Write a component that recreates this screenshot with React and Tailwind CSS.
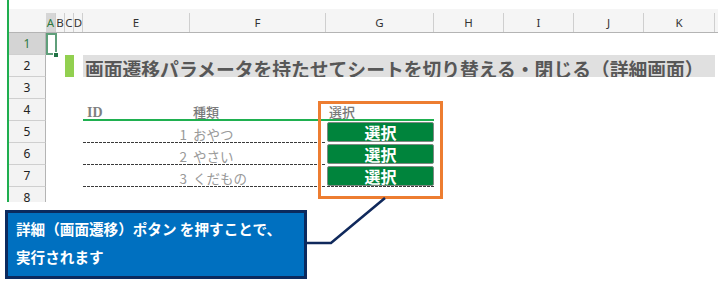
import React from "react";

const DASH =
  "h-px w-full bg-[linear-gradient(to_right,#3a3a3a_0_3px,transparent_3px_4px)] bg-[length:4px_1px] bg-repeat-x";

function RowHead({ n, sel }) {
  return (
    <div
      className={
        sel
          ? "w-[37px] shrink-0 h-full border-r border-b border-r-[#b4b4b4] border-b-[#cfcfcf] bg-[#d4d4d4] text-[#2f7a3e] flex items-center justify-center text-[12px] font-['Noto_Sans',sans-serif]"
          : "w-[37px] shrink-0 h-full border-r border-b border-r-[#b4b4b4] border-b-[#cfcfcf] bg-[#f3f3f3] text-[#222] flex items-center justify-center text-[12px] font-['Noto_Sans',sans-serif]"
      }
    >
      {n}
    </div>
  );
}

function Lead() {
  return (
    <>
      <div className="w-[10px] shrink-0" />
      <div className="w-[9px] shrink-0" />
      <div className="w-[9px] shrink-0" />
      <div className="w-[9px] shrink-0" />
    </>
  );
}

function DataRow({ n, id, name, last }) {
  return (
    <div className="flex h-[22px]">
      <RowHead n={n} />
      <Lead />
      <div className="w-[107px] shrink-0 flex flex-col">
        <div className="flex-1 flex items-end justify-end pr-[3px] pb-[1px] text-[13.5px] leading-none text-[#9a9a9a]">
          {id}
        </div>
        <div className={DASH} />
      </div>
      <div className="w-[136px] shrink-0 flex flex-col">
        <div className="flex-1 flex items-end pl-[3px] pb-[1px] text-[13.5px] leading-none text-[#9a9a9a]">
          {name}
        </div>
        <div className={DASH} />
      </div>
      <div className="w-[108px] shrink-0 flex flex-col pt-[1px] pl-[1px]">
        <div className="h-[20px] w-[107px] rounded-[2px] border border-[#7f8a82] bg-[#00843c] flex items-center justify-center text-white font-bold text-[16px] leading-none">
          選択
        </div>
        {last ? <div className={DASH} /> : <div className="h-px" />}
      </div>
    </div>
  );
}

export default function App() {
  const cols = [
    ["A", "w-[10px]"],
    ["B", "w-[9px]"],
    ["C", "w-[9px]"],
    ["D", "w-[9px]"],
    ["E", "w-[107px]"],
    ["F", "w-[136px]"],
    ["G", "w-[108px]"],
    ["H", "w-[70px]"],
    ["I", "w-[70px]"],
    ["J", "w-[70px]"],
    ["K", "w-[71px]"],
  ];
  return (
    <div className="relative w-[718px] h-[289px] bg-white overflow-hidden font-['Noto_Sans_CJK_JP',sans-serif]">
      <div className="flex">
        <div className="w-[7px] shrink-0" />
        <div className="w-[711px] h-[202px] border-l-2 border-[#1fae4f] overflow-hidden flex flex-col">
          <div className="h-[9px] shrink-0" />
          {/* column header */}
          <div className="flex h-[24px] shrink-0 pt-[4px] bg-[#f5f5f5] border-b border-[#b4b4b4] font-['Noto_Sans',sans-serif] text-[11.5px] text-[#333]">
            <div className="w-[37px] shrink-0" />
            {cols.map(([l, w]) => (
              <div
                key={l}
                className={
                  l === "A"
                    ? w + " shrink-0 border-r border-[#cfcfcf] bg-[#d6d6d6] text-[#2f7a3e] flex items-center justify-center overflow-hidden"
                    : w + " shrink-0 border-r border-[#cfcfcf] flex items-center justify-center overflow-hidden"
                }
              >
                {l}
              </div>
            ))}
            <div className="flex-1" />
          </div>
          {/* row 1 */}
          <div className="flex h-[22px] shrink-0">
            <RowHead n={1} sel />
          </div>
          {/* row 2 title */}
          <div className="flex h-[22px] shrink-0">
            <RowHead n={2} />
            <div className="w-[10px] shrink-0" />
            <div className="w-[9px] shrink-0" />
            <div className="w-[9px] shrink-0 bg-[#92d050]" />
            <div className="w-[9px] shrink-0" />
            <div className="w-[632px] shrink-0 bg-[#e0e0e0] relative overflow-hidden">
              <span className="absolute left-[2px] top-[5px] whitespace-nowrap text-[18.8px] leading-none font-bold text-[#575757]">
                画面遷移パラメータを持たせてシートを切り替える・閉じる（詳細画面）
              </span>
            </div>
          </div>
          {/* row 3 */}
          <div className="flex h-[22px] shrink-0">
            <RowHead n={3} />
          </div>
          {/* row 4 headers */}
          <div className="flex h-[22px] shrink-0">
            <RowHead n={4} />
            <Lead />
            <div className="w-[107px] shrink-0 border-b-2 border-[#1fb050] flex items-end pl-[4px]">
              <span className="font-['Liberation_Serif',serif] font-bold text-[14px] leading-[12px] text-[#7f7f7f]">
                ID
              </span>
            </div>
            <div className="w-[136px] shrink-0 border-b-2 border-[#1fb050] flex items-end pl-[3px]">
              <span className="text-[13px] leading-none pb-[1px] font-medium text-[#7a7a7a]">種類</span>
            </div>
            <div className="w-[108px] shrink-0 border-b-2 border-[#1fb050] flex items-end pl-[3px]">
              <span className="text-[13px] leading-none pb-[1px] font-medium text-[#7a7a7a]">選択</span>
            </div>
          </div>
          <DataRow n={5} id="1" name="おやつ" />
          <DataRow n={6} id="2" name="やさい" />
          <DataRow n={7} id="3" name="くだもの" last />
          <div className="flex h-[22px] shrink-0">
            <RowHead n={8} />
          </div>
        </div>
      </div>

      {/* A1 selection */}
      <div className="absolute left-[46px] top-[33px] w-[11px] h-[22px] border-2 border-[#5f9f7a]" />
      <div className="absolute left-[53px] top-[52px] w-[6px] h-[6px] bg-[#217346] border border-white" />

      {/* orange highlight */}
      <div className="absolute left-[318px] top-[101px] w-[125px] h-[98px] border-[3px] border-[#ed7d31]" />

      {/* connector */}
      <svg className="absolute left-0 top-0" width="718" height="289">
        <polyline
          points="385,198 331,243 305,243"
          fill="none"
          stroke="#10295c"
          strokeWidth="2.6"
        />
      </svg>

      {/* callout */}
      <div className="absolute left-[5px] top-[210px] w-[302px] h-[69px] border-[3px] border-[#0b2a5e] bg-[#0070c0] pl-[8px] pt-[2px] text-white font-bold text-[14.6px] leading-[28px] whitespace-nowrap">
        <div>詳細（画面遷移）ポタン を押すことで、</div>
        <div>実行されます</div>
      </div>
    </div>
  );
}
